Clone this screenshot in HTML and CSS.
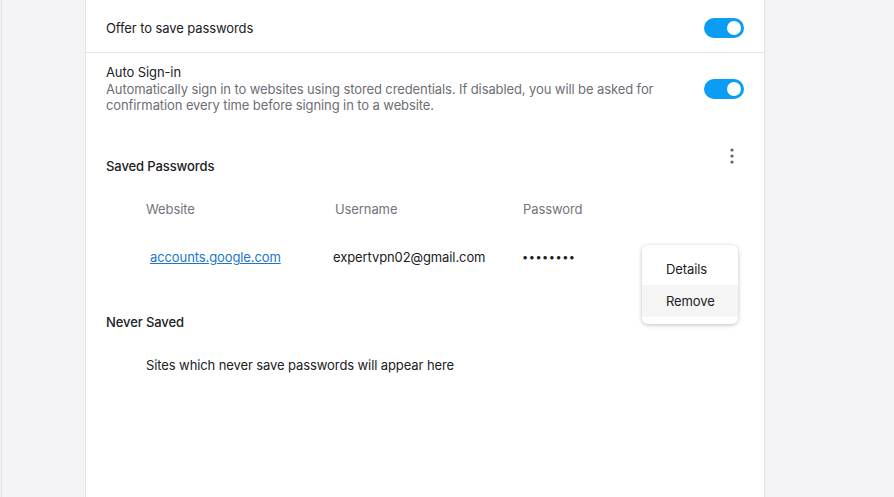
FILE: index.html
```html
<!DOCTYPE html>
<html lang="en">
<head>
    <meta charset="UTF-8">
    <meta name="viewport" content="width=device-width, initial-scale=1.0">
    <title>Passwords</title>
    <link rel="stylesheet" href="styles.css">
</head>
<body>
    <div class="frame">
        <div class="panel">
            <div class="row first">
                <div class="row-text">
                    <div class="row-title">Offer to save passwords</div>
                </div>
                <span class="toggle on"><span class="knob"></span></span>
            </div>
            <div class="row last">
                <div class="row-text">
                    <div class="row-title">Auto Sign-in</div>
                    <div class="row-desc">Automatically sign in to websites using stored credentials. If disabled, you will be asked for confirmation every time before signing in to a website.</div>
                </div>
                <span class="toggle on"><span class="knob"></span></span>
            </div>

            <div class="section-head">
                <h2 class="section-title">Saved Passwords</h2>
                <button class="kebab" title="More actions">
                    <svg width="4" height="16" viewBox="0 0 4 16"><circle cx="2" cy="2" r="1.6"/><circle cx="2" cy="8" r="1.6"/><circle cx="2" cy="14" r="1.6"/></svg>
                </button>
            </div>

            <div class="pw-table">
                <div class="pw-head">
                    <span class="col site">Website</span>
                    <span class="col user">Username</span>
                    <span class="col pass">Password</span>
                </div>
                <div class="pw-row">
                    <span class="col site"><a href="#">accounts.google.com</a></span>
                    <span class="col user">expertvpn02@gmail.com</span>
                    <span class="col pass dots">&#8226;&#8226;&#8226;&#8226;&#8226;&#8226;&#8226;&#8226;</span>
                    <div class="menu">
                        <div class="menu-item">Details</div>
                        <div class="menu-item hover">Remove</div>
                    </div>
                </div>
            </div>

            <h2 class="section-title never">Never Saved</h2>
            <p class="empty">Sites which never save passwords will appear here</p>
        </div>
    </div>
</body>
</html>
```

FILE: styles.css
```css
html, body {
    height: 100%;
}

body {
    margin: 0;
    background: #f4f4f6;
    font-family: Inter, "Noto Sans", sans-serif;
    font-size: 13px;
    letter-spacing: -0.1px;
    color: #202124;
    overflow: hidden;
}

.frame {
    margin-left: 1px;
    border-left: 1px solid #e2e2e5;
    height: 100%;
}

.panel {
    margin-left: 83px;
    width: 678px;
    height: 100%;
    background: #fff;
    border-left: 1px solid #e2e2e5;
    border-right: 1px solid #e2e2e5;
}

.row {
    display: flex;
    align-items: center;
    gap: 20px;
    padding: 0 20px;
}

.row.first {
    padding-top: 18px;
    padding-bottom: 14px;
    border-bottom: 1px solid #e4e4e6;
}

.row.first .row-title {
    line-height: 20px;
}

.row.last {
    padding-top: 11px;
}

.row-text {
    flex: 1;
}

.row-title {
    line-height: 17px;
}

.row-desc {
    color: #6e6e76;
    line-height: 16px;
}

.toggle {
    width: 40px;
    height: 20px;
    border-radius: 10px;
    background: #0a9df3;
    display: flex;
    align-items: center;
    justify-content: flex-end;
    padding: 0 3px;
    box-sizing: border-box;
    flex-shrink: 0;
}

.knob {
    width: 14px;
    height: 14px;
    border-radius: 50%;
    background: #fff;
}

.section-head {
    display: flex;
    justify-content: space-between;
    align-items: flex-start;
    padding: 29px 20px 0 20px;
}

.section-title {
    margin: 0;
    font-size: 13px;
    font-weight: 500;
    line-height: 20px;
    padding-top: 14px;
}

.kebab {
    border: 0;
    background: none;
    padding: 0;
    width: 4px;
    height: 16px;
    margin-right: 10px;
    margin-top: 6px;
    fill: #5f6368;
    display: flex;
}

.pw-table {
    padding: 23px 0 0 60px;
}

.pw-head, .pw-row {
    display: flex;
    line-height: 20px;
}

.pw-head {
    color: #74747c;
}

.pw-row {
    position: relative;
    margin-top: 28px;
}

.col.site {
    width: 189px;
}

.col.user {
    width: 188px;
}

.pw-row .col.site {
    padding-left: 4px;
    width: 183px;
}

.pw-row .col.user {
    width: 189px;
}

.pw-row a {
    color: #1d76cc;
    text-decoration: underline;
}

.dots {
    letter-spacing: 0.5px;
    font-size: 11px;
}

.menu {
    position: absolute;
    left: 496px;
    top: -2px;
    width: 96px;
    padding: 8px 0 7px;
    background: #fff;
    border-radius: 6px;
    box-shadow: 0 1px 4px rgba(0, 0, 0, 0.25);
}

.menu-item {
    padding: 0 24px;
    line-height: 32px;
}

.menu-item.hover {
    background: #f5f5f6;
}

.never {
    padding: 45px 20px 0 20px;
}

.empty {
    margin: 0;
    padding: 23px 0 0 60px;
    line-height: 20px;
}
```
